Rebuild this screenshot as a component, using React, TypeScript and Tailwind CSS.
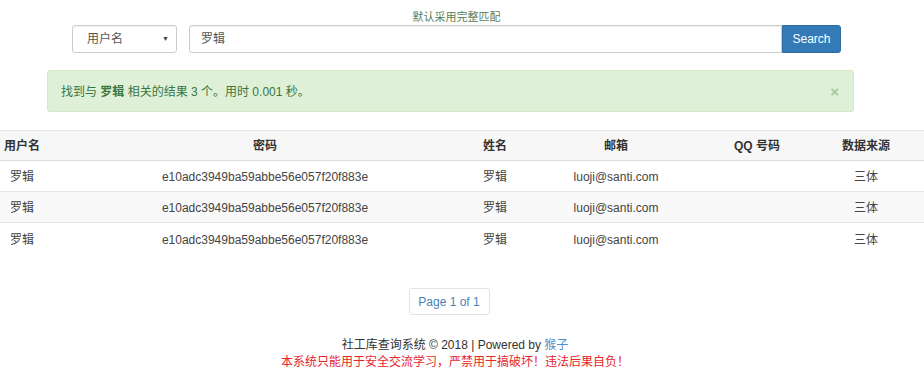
import React from 'react';

const rows = [
  { user: '罗辑', pass: 'e10adc3949ba59abbe56e057f20f883e', name: '罗辑', email: 'luoji@santi.com', qq: '', source: '三体' },
  { user: '罗辑', pass: 'e10adc3949ba59abbe56e057f20f883e', name: '罗辑', email: 'luoji@santi.com', qq: '', source: '三体' },
  { user: '罗辑', pass: 'e10adc3949ba59abbe56e057f20f883e', name: '罗辑', email: 'luoji@santi.com', qq: '', source: '三体' },
];

// column grid shared by header and body rows
const cols = 'grid grid-cols-[44px_430px_42px_200px_82px_126px] items-center';

export default function App() {
  return (
    <div className="w-[924px] h-[380px] bg-white text-[12px] text-[#333] font-['Liberation_Sans','Noto_Sans_CJK_SC',sans-serif] overflow-hidden">
      {/* search form */}
      <div className="ml-[72px] w-[769px] pt-[10px]">
        <div className="text-center text-[11px] leading-[14px] text-[#5b7d56]">默认采用完整匹配</div>
        <div className="flex mt-[1px] h-[28px]">
          <div className="w-[105px] flex items-center justify-between pl-[14px] pr-[7px] border border-[#ccc] rounded-[3px] text-[#555] shadow-[inset_0_1px_1px_rgba(0,0,0,0.06)]">
            <span>用户名</span>
            <span className="text-[7px] text-[#444]">▼</span>
          </div>
          <div className="ml-[12px] flex-1 flex items-center pl-[11px] border border-[#ccc] rounded-l-[3px] text-[#555] shadow-[inset_0_1px_1px_rgba(0,0,0,0.06)]">
            罗辑
          </div>
          <button className="w-[59px] bg-[#337ab7] border border-[#2e6da4] text-white rounded-r-[3px] text-[12px]">
            Search
          </button>
        </div>
      </div>

      {/* result alert */}
      <div className="ml-[47px] w-[807px] mt-[17px] h-[42px] flex items-center justify-between pl-[13px] pr-[14px] bg-[#dff0d8] border border-[#d6e9c6] rounded-[3px] text-[#3c763d]">
        <span className="mt-[2px]">
          找到与 <b>罗辑</b> 相关的结果 3 个。用时 0.001 秒。
        </span>
        <span className="text-[15px] font-bold text-[#a8c7a0] leading-none">×</span>
      </div>

      {/* results table */}
      <div className="mt-[18px] border-t border-[#e4e4e4]">
        <div className={`${cols} h-[30px] bg-[#f7f7f7] border-b border-[#dedede] font-bold text-center text-[#333]`}>
          <div>用户名</div>
          <div className="pl-[12px]">密码</div>
          <div>姓名</div>
          <div>邮箱</div>
          <div>QQ 号码</div>
          <div className="pl-[10px]">数据来源</div>
        </div>
        {rows.map((r, i) => (
          <div
            key={i}
            className={`${cols} h-[31px] pt-[2px] text-center text-[#444] border-b border-[#e6e6e6] ${i % 2 === 1 ? 'bg-[#f9f9f9]' : 'bg-white'} ${i === rows.length - 1 ? 'border-b-0' : ''}`}
          >
            <div>{r.user}</div>
            <div className="pl-[12px]">{r.pass}</div>
            <div>{r.name}</div>
            <div>{r.email}</div>
            <div>{r.qq}</div>
            <div className="pl-[10px]">{r.source}</div>
          </div>
        ))}
      </div>

      {/* pagination */}
      <div className="flex justify-center mt-[34px]">
        <div className="ml-[-26px] w-[81px] h-[27px] flex items-center justify-center border border-[#e2e2e2] rounded-[3px] text-[#4a82b8]">
          Page 1 of 1
        </div>
      </div>

      {/* footer */}
      <div className="mt-[22px] text-center ml-[-14px] leading-[17px]">
        <div className="text-[#333]">
          社工库查询系统 © 2018 | Powered by <span className="text-[#4a90c8]">猴子</span>
        </div>
        <div className="text-[#e5262b]">本系统只能用于安全交流学习，严禁用于搞破坏！违法后果自负！</div>
      </div>
    </div>
  );
}
